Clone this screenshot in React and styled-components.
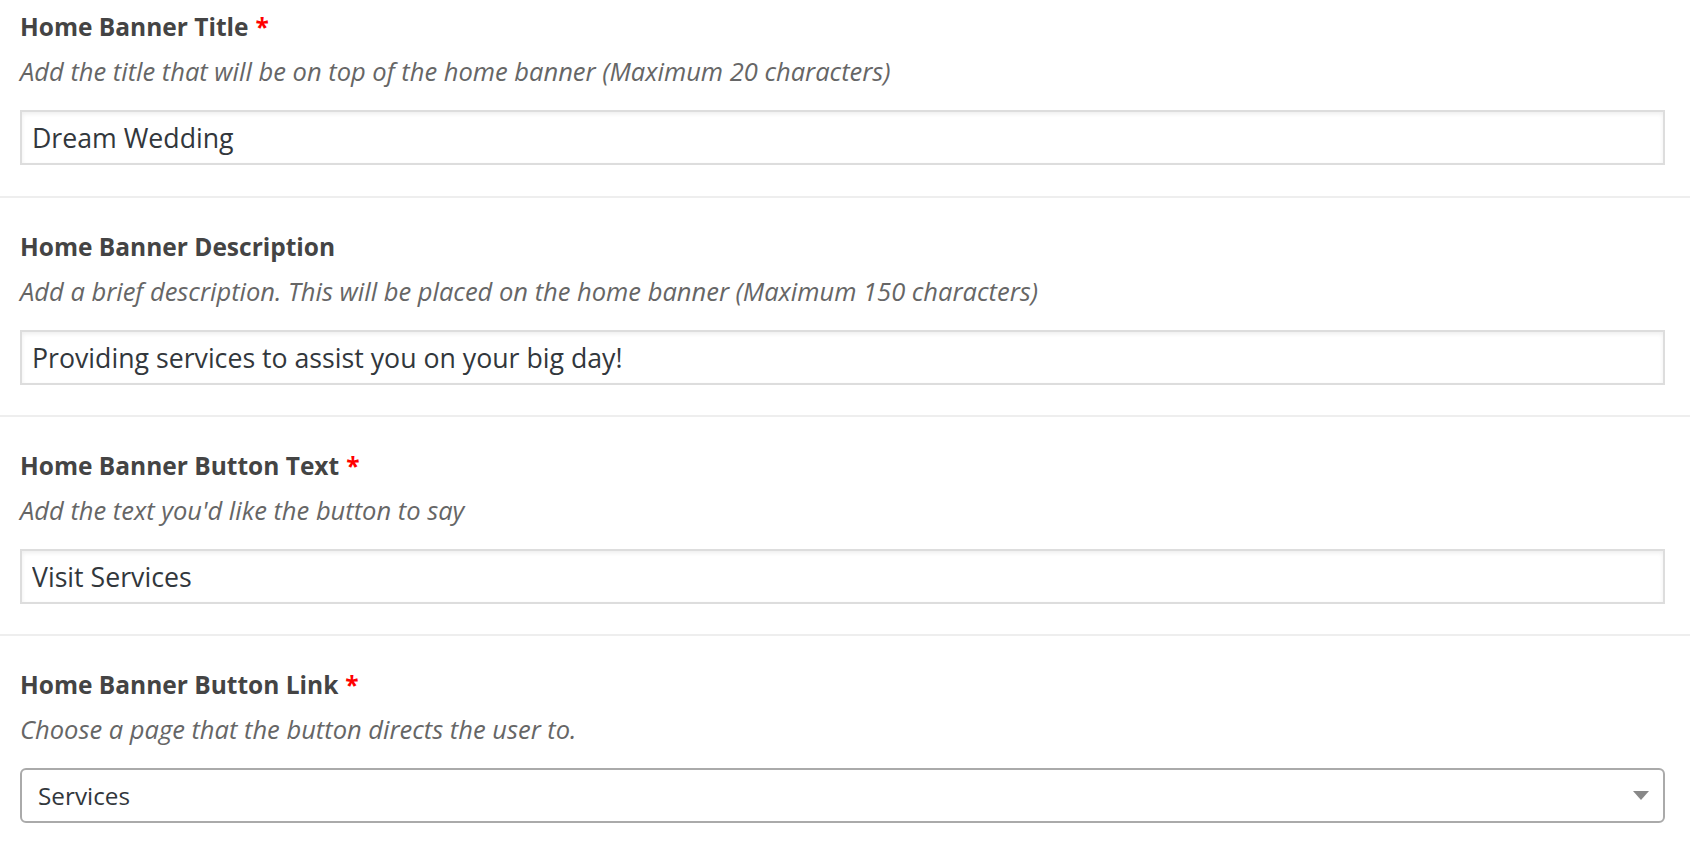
import React from 'react';
import styled, { createGlobalStyle } from "styled-components";

const GlobalStyle = createGlobalStyle`
	html, body {
		margin: 0;
		padding: 0;
		background: #fff;
	}
	body {
		font-family: "Segoe UI", "Open Sans", "Noto Sans", sans-serif;
		color: #444;
	}
`

const Form = styled.div`
	width: 1690px;
	display: flex;
	flex-direction: column;
`

const Field = styled.div`
	display: flex;
	flex-direction: column;
	padding: 34px 25px 30px 20px;
	border-top: 2px solid #eee;

	&:first-child {
		padding-top: 12px;
		padding-bottom: 31px;
		border-top: none;
	}
`

const Label = styled.label`
	font-size: 24.5px;
	line-height: 30px;
	font-weight: 700;
	color: #444;
	margin-bottom: 13px;
`

const Required = styled.span`
	color: #f00;
	margin-left: 7px;
`

const Description = styled.p`
	margin: 0 0 23px;
	font-size: 25.5px;
	line-height: 32px;
	font-style: italic;
	color: #666;
`

const TextInput = styled.input`
	box-sizing: border-box;
	width: 100%;
	height: 55px;
	margin: 0;
	padding: 0 10px;
	border: 2px solid #ddd;
	border-radius: 0;
	box-shadow: inset 0 2px 4px rgba(0, 0, 0, 0.07);
	background: #fff;
	font-family: inherit;
	font-size: 26.7px;
	color: #32373c;
	outline: none;
`

const SelectBox = styled.div`
	box-sizing: border-box;
	width: 100%;
	height: 55px;
	display: flex;
	align-items: center;
	justify-content: space-between;
	padding: 0 12px 0 16px;
	border: 2px solid #aaa;
	border-radius: 6px;
	background: #fff;
	font-size: 24.3px;
	color: #32373c;
`

const Arrow = styled.span`
	width: 0;
	height: 0;
	border-left: 8px solid transparent;
	border-right: 8px solid transparent;
	border-top: 9px solid #888;
	margin-right: 2px;
`

const fields = [
	{
		label: 'Home Banner Title',
		required: true,
		description: 'Add the title that will be on top of the home banner (Maximum 20 characters)',
		value: 'Dream Wedding',
	},
	{
		label: 'Home Banner Description',
		required: false,
		description: 'Add a brief description. This will be placed on the home banner (Maximum 150 characters)',
		value: 'Providing services to assist you on your big day!',
	},
	{
		label: 'Home Banner Button Text',
		required: true,
		description: "Add the text you'd like the button to say",
		value: 'Visit Services',
	},
]

const App = () => {
	return (
		<>
			<GlobalStyle/>
			<Form>
				{fields.map(f => (
					<Field key={f.label}>
						<Label>
							{f.label}
							{f.required && <Required>*</Required>}
						</Label>
						<Description>{f.description}</Description>
						<TextInput type="text" defaultValue={f.value}/>
					</Field>
				))}

				<Field>
					<Label>
						Home Banner Button Link
						<Required>*</Required>
					</Label>
					<Description>Choose a page that the button directs the user to.</Description>
					<SelectBox>
						<span>Services</span>
						<Arrow/>
					</SelectBox>
				</Field>
			</Form>
		</>
	);
}

export default App
